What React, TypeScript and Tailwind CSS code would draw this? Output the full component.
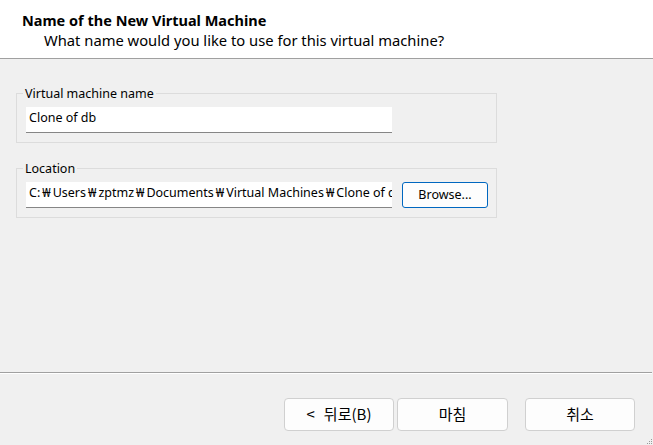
import React from "react";

const uiFont = {
  fontFamily: '"Noto Sans", "Noto Sans CJK KR", sans-serif',
};

const cjkFont = {
  fontFamily: '"Noto Sans CJK KR", "Noto Sans", sans-serif',
};

function GroupBox({
  label,
  children,
}: {
  label: string;
  children: React.ReactNode;
}) {
  return (
    <div className="relative w-[481px] h-[50px] border border-[#dcdcdc]">
      <span className="absolute left-[6px] -top-[9px] px-[2px] bg-[#f0f0f0] text-[12.5px] leading-[17px] text-black whitespace-nowrap">
        {label}
      </span>
      <div className="flex items-start gap-[10px] pl-[9px] pt-[13px]">{children}</div>
    </div>
  );
}

function TextField({ children }: { children: React.ReactNode }) {
  return (
    <div className="w-[366px] h-[26px] shrink-0 bg-white border-b border-[#868686] pl-[3px] pt-[2px] overflow-hidden whitespace-nowrap text-[12.5px] leading-[17px] text-black">
      {children}
    </div>
  );
}

// Korean-locale path separator, drawn a little wider as the system font does
function Won() {
  return <span className="px-[2px]">₩</span>;
}

function DialogButton({
  children,
  className = "",
}: {
  children: React.ReactNode;
  className?: string;
}) {
  return (
    <button
      className={`h-[33px] rounded-[4px] border border-[#d0d0d0] bg-[#fdfdfd] text-[15px] text-black flex items-center justify-center ${className}`}
      style={cjkFont}
    >
      {children}
    </button>
  );
}

export default function App() {
  return (
    <div
      className="relative w-[653px] h-[445px] bg-[#f0f0f0] flex flex-col overflow-hidden"
      style={uiFont}
    >
      {/* Wizard page header */}
      <div className="h-[59px] shrink-0 bg-white border-b border-[#a0a0a0] pl-[22px] pt-[10px]">
        <div className="text-[14.5px] font-bold leading-[20px] text-black">
          Name of the New Virtual Machine
        </div>
        <div className="pl-[22px] text-[14.75px] leading-[20px] text-black">
          What name would you like to use for this virtual machine?
        </div>
      </div>

      {/* Page body */}
      <div className="flex-1 pl-[16px] pt-[34px] flex flex-col gap-[25px]">
        <GroupBox label="Virtual machine name">
          <TextField>Clone of db</TextField>
        </GroupBox>
        <GroupBox label="Location">
          <TextField>
            C:<Won />Users<Won />zptmz<Won />Documents<Won />Virtual Machines<Won />Clone of db
          </TextField>
          <button className="w-[86px] h-[26px] shrink-0 rounded-[3px] border border-[#0067c0] bg-[#fdfdfd] text-[12.5px] text-black flex items-center justify-center">
            Browse...
          </button>
        </GroupBox>
      </div>

      {/* Etched separator */}
      <div className="h-[2px] shrink-0 border-t border-[#a0a0a0] border-b border-b-white mr-[1px]" />

      {/* Navigation buttons */}
      <div className="h-[71px] shrink-0 flex pl-[284px] pt-[24px]">
        <DialogButton className="w-[110px]">
          <span className="mr-[9px]">&lt;</span>
          <span>뒤로(B)</span>
        </DialogButton>
        <DialogButton className="w-[111px] ml-[3px]">마침</DialogButton>
        <DialogButton className="w-[110px] ml-[17px]">취소</DialogButton>
      </div>

      {/* Size grip */}
      <svg
        className="absolute right-0 bottom-0"
        width="8"
        height="8"
        viewBox="0 0 8 8"
      >
        <rect x="6" y="2" width="1" height="1" fill="#9a9a9a" />
        <rect x="4" y="4" width="1" height="1" fill="#9a9a9a" />
        <rect x="6" y="4" width="1" height="1" fill="#9a9a9a" />
        <rect x="2" y="6" width="1" height="1" fill="#9a9a9a" />
        <rect x="4" y="6" width="1" height="1" fill="#9a9a9a" />
        <rect x="6" y="6" width="1" height="1" fill="#9a9a9a" />
      </svg>
    </div>
  );
}
